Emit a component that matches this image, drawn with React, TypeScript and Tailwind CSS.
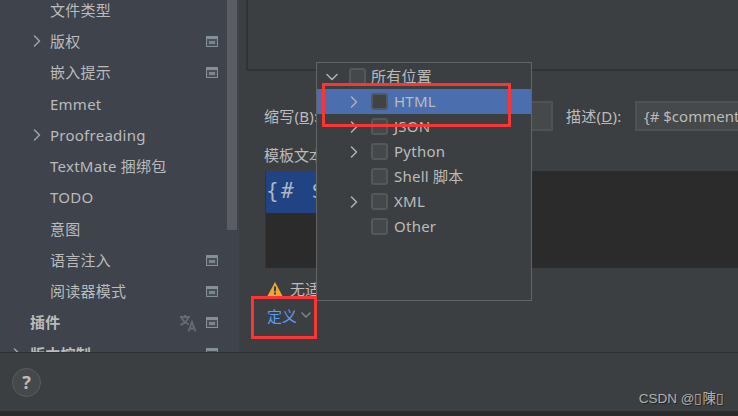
import { ChevronDown, ChevronRight } from "lucide-react";

const font = { fontFamily: '"Noto Sans", "Noto Sans CJK SC", sans-serif' };

function ScopeIcon() {
    return (
        <svg width="12" height="11" viewBox="0 0 12 11" className="shrink-0">
            <rect x="0" y="0" width="12" height="11" fill="#83909a" />
            <rect x="1" y="3" width="10" height="7" fill="#4a4f57" />
            <rect x="3" y="5" width="6" height="3" fill="#7a868e" />
        </svg>
    );
}

function TranslateIcon() {
    return (
        <svg width="18" height="18" viewBox="0 0 18 18" fill="none" stroke="#666a70" strokeWidth="1.9">
            <path d="M1 3h10M6 1v2M2.500 3c1 3.500 4 6 7.500 7.500M9.500 3c-1 3.500-4 6.500-8 8" />
            <path d="M9.500 17.500l3.500-9.500 3.500 9.500M10.700 14.500h4.600" />
        </svg>
    );
}

const sideRows = [
    { label: "文件类型", indent: "pl-[50px]" },
    { label: "版权", indent: "pl-[50px]", arrow: true, scope: true },
    { label: "嵌入提示", indent: "pl-[50px]", scope: true },
    { label: "Emmet", indent: "pl-[50px]" },
    { label: "Proofreading", indent: "pl-[50px]", arrow: true },
    { label: "TextMate 捆绑包", indent: "pl-[50px]" },
    { label: "TODO", indent: "pl-[50px]" },
    { label: "意图", indent: "pl-[50px]" },
    { label: "语言注入", indent: "pl-[50px]", scope: true },
    { label: "阅读器模式", indent: "pl-[50px]", scope: true },
    { label: "插件", indent: "pl-[30px]", scope: true, bold: true, translate: true },
    { label: "版本控制", indent: "pl-[30px]", scope: true, bold: true, arrowLeft: true },
];

const popupRows = [
    { label: "所有位置", open: true },
    { label: "HTML", arrow: true, selected: true },
    { label: "JSON", arrow: true },
    { label: "Python", arrow: true },
    { label: "Shell 脚本" },
    { label: "XML", arrow: true },
    { label: "Other" },
];

function Sidebar() {
    return (
        <div className="relative w-[239px] shrink-0 bg-[#3e434c] overflow-hidden">
            <div className="-mt-[5.5px]">
                {sideRows.map((row) => (
                    <div
                        key={row.label}
                        className={`relative h-[31.25px] flex items-center pr-[21px] text-[15px] tracking-[0.25px] text-[#bbbbbb] ${row.indent} ${row.bold ? "font-bold" : ""}`}
                    >
                        {row.arrow && (
                            <ChevronRight size={20} strokeWidth={1.8} className="absolute left-[27px] text-[#a0a3a5]" />
                        )}
                        {row.arrowLeft && (
                            <ChevronRight size={20} strokeWidth={1.8} className="absolute left-[7px] text-[#a0a3a5]" />
                        )}
                        <span className="flex-1 whitespace-nowrap">{row.label}</span>
                        {row.translate && (
                            <span className="mr-[9px]">
                                <TranslateIcon />
                            </span>
                        )}
                        {row.scope && <ScopeIcon />}
                    </div>
                ))}
            </div>
            <div className="absolute left-[227px] top-0 w-[10px] h-[230px] bg-[#5a5d63]" />
        </div>
    );
}

function Popup() {
    return (
        <div className="absolute left-[316px] top-[62px] w-[216px] h-[239px] bg-[#3c3f41] border border-[#646464] pt-[1px]">
            {popupRows.map((row) => (
                <div
                    key={row.label}
                    className={`relative h-[25px] flex items-center text-[15px] tracking-[0.25px] text-[#bbbbbb] ${row.selected ? "bg-[#4b6eaf] pl-[54px]" : row.open ? "pl-[32px]" : "pl-[54px]"}`}
                >
                    {row.arrow && (
                        <ChevronRight size={20} strokeWidth={1.8} className="absolute left-[27px] text-[#afb1b3]" />
                    )}
                    {row.open && (
                        <ChevronDown size={20} strokeWidth={1.8} className="absolute left-[5px] text-[#afb1b3]" />
                    )}
                    <span className={`w-[17px] h-[17px] rounded-[3px] border-2 border-[#55585a] shrink-0 ${row.selected ? "bg-[#3f4345]" : "bg-[#43494a]"}`} />
                    <span className={`whitespace-nowrap ${row.open ? "ml-[5px]" : "ml-[6px]"}`}>{row.label}</span>
                </div>
            ))}
        </div>
    );
}

function MainPanel() {
    return (
        <div className="flex-1 min-w-0 overflow-hidden pl-[8px]">
            <div className="h-[71px] -ml-[1px] border-l-2 border-b-2 border-[#323232]" />
            <div className="h-[30px] mt-[30px] flex items-center pl-[17px] text-[15px] tracking-[0.25px] text-[#bbbbbb]">
                <span className="w-[52px] shrink-0 whitespace-nowrap">
                    缩写(<span className="underline">B</span>):
                </span>
                <div className="w-[237px] shrink-0 h-[30px] bg-[#45494a] border-2 border-[#4f5254]" />
                <span className="ml-[13px] w-[56px] shrink-0 whitespace-nowrap">
                    描述(<span className="underline">D</span>):
                </span>
                <div className="ml-[13px] w-[200px] shrink-0 h-[30px] bg-[#45494a] border-2 border-[#4f5254] pl-[7px] flex items-center whitespace-nowrap tracking-normal">
                    {"{# $comment #}"}
                </div>
            </div>
            <div className="mt-[14px] pl-[17px] h-[20px] text-[15px] text-[#bbbbbb] leading-[20px]">模板文本</div>
            <div className="mt-[6px] ml-[18px] h-[97px] bg-[#2b2b2b] border-l border-[#323232]">
                <div
                    className="h-[42px] w-[240px] bg-[#214283] flex items-center text-[21px] tracking-[2.4px] text-[#a9b7c6]"
                    style={{ fontFamily: '"DejaVu Sans Mono", monospace' }}
                >
                    {"{# $"}
                </div>
            </div>
            <div className="mt-[11px] pl-[20px] h-[20px] flex items-center text-[15px] text-[#bbbbbb]">
                <svg width="16" height="16" viewBox="0 0 16 15" className="shrink-0">
                    <path d="M8 0.500 15.500 14.500H0.500Z" fill="#f0a732" />
                    <rect x="7" y="5" width="2" height="5" fill="#3c3f41" />
                    <rect x="7" y="11" width="2" height="2" fill="#3c3f41" />
                </svg>
                <span className="ml-[7px] whitespace-nowrap">无适用</span>
            </div>
            <div className="mt-[7px] pl-[20px] h-[20px] flex items-center text-[15px] text-[#589df6]">
                <span>定义</span>
                <ChevronDown size={16} strokeWidth={2.5} className="ml-[1px] -mt-[2px] text-[#7d8082]" />
            </div>
        </div>
    );
}

export default function App() {
    return (
        <div className="relative w-[738px] h-[416px] overflow-hidden bg-[#3c3f41] flex flex-col" style={font}>
            <div className="h-[352px] flex shrink-0">
                <Sidebar />
                <MainPanel />
            </div>

            {/* Bottom bar */}
            <div className="h-[59px] shrink-0 border-t border-[#2f2f2f] flex items-center pl-[12px]">
                <div className="w-[29px] h-[29px] rounded-full bg-[#46494b] border border-[#5a5d5f] flex items-center justify-center text-[18px] font-bold text-[#bbbbbb]">
                    ?
                </div>
                <div
                    className="ml-auto mr-[14px] mt-[34px] text-[13.5px] text-[#b0b2b3] whitespace-nowrap [text-shadow:1px_1px_0_#222222]"
                    style={{ fontFamily: '"Liberation Sans", "Noto Sans CJK TC", sans-serif' }}
                >
                    CSDN @▯陳▯
                </div>
            </div>
            <div className="flex-1 bg-[#2b2b2b]" />

            <Popup />

            {/* Red annotation boxes */}
            <div className="absolute left-[322px] top-[83px] w-[189px] h-[44px] border-[3px] border-[#fb3535]" />
            <div className="absolute left-[251px] top-[296px] w-[66px] h-[43px] border-[3px] border-[#fb3535]" />
        </div>
    );
}
